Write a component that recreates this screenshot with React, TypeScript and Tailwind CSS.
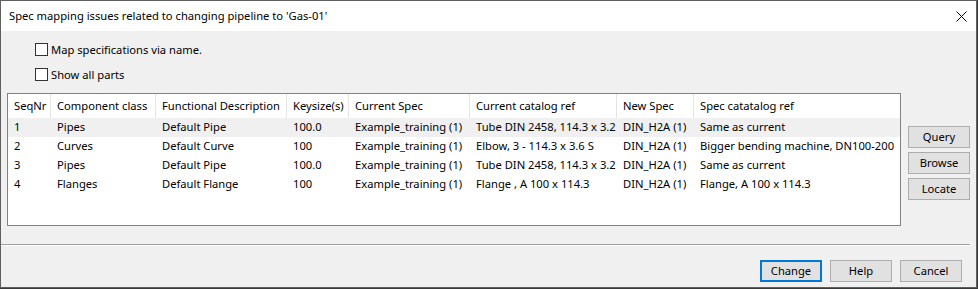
import React from "react";

const cols = "grid-cols-[43px_105px_131px_62px_121px_147px_77px_1fr]";

const headers = [
  "SeqNr",
  "Component class",
  "Functional Description",
  "Keysize(s)",
  "Current Spec",
  "Current catalog ref",
  "New Spec",
  "Spec catatalog ref",
];

const rows = [
  ["1", "Pipes", "Default Pipe", "100.0", "Example_training (1)", "Tube DIN 2458, 114.3 x 3.2", "DIN_H2A (1)", "Same as current"],
  ["2", "Curves", "Default Curve", "100", "Example_training (1)", "Elbow, 3 - 114.3 x 3.6 S", "DIN_H2A (1)", "Bigger bending machine, DN100-200"],
  ["3", "Pipes", "Default Pipe", "100.0", "Example_training (1)", "Tube DIN 2458, 114.3 x 3.2", "DIN_H2A (1)", "Same as current"],
  ["4", "Flanges", "Default Flange", "100", "Example_training (1)", "Flange , A 100 x 114.3", "DIN_H2A (1)", "Flange, A 100 x 114.3"],
];

function Checkbox({ label }: { label: string }) {
  return (
    <div className="flex items-center h-[13px]">
      <div className="w-[13px] h-[13px] border border-[#333333] bg-white" />
      <span className="ml-[3px] leading-[13px]">{label}</span>
    </div>
  );
}

function Btn({ label, primary }: { label: string; primary?: boolean }) {
  return (
    <div
      className={
        "w-[62px] h-[22px] flex items-center justify-center bg-[#e1e1e1] " +
        (primary ? "border-2 border-[#0078d7]" : "border border-[#adadad]")
      }
    >
      {label}
    </div>
  );
}

export default function App() {
  return (
    <div
      className="w-[978px] h-[289px] bg-[#3a3a3a] text-[11.2px] text-black"
      style={{ fontFamily: '"Noto Sans", sans-serif' }}
    >
      <div className="w-[977px] h-[288px] border border-[#5f5f5f] bg-[#f0f0f0] flex flex-col">
        {/* title bar */}
        <div className="h-[30px] bg-white flex items-center justify-between pl-[8px] pr-[9px] shrink-0">
          <span>Spec mapping issues related to changing pipeline to 'Gas-01'</span>
          <svg width="11" height="11" viewBox="0 0 11 11">
            <path d="M0.5 0.5 L10.5 10.5 M10.5 0.5 L0.5 10.5" stroke="#000" strokeWidth="1" />
          </svg>
        </div>

        {/* checkboxes */}
        <div className="pl-[34px] pt-[12px] flex flex-col gap-[12px]">
          <Checkbox label="Map specifications via name." />
          <Checkbox label="Show all parts" />
        </div>

        {/* table + side buttons */}
        <div className="flex pl-[6px] mt-[12px]">
          <div className="w-[894px] h-[133px] border border-[#828282] bg-white">
            <div className={"grid h-[24px] " + cols}>
              {headers.map((h, i) => (
                <div
                  key={h}
                  className={
                    "flex items-center pl-[6px] whitespace-nowrap " +
                    (i < headers.length - 1 ? "border-r border-[#e5e5e5]" : "")
                  }
                >
                  {h}
                </div>
              ))}
            </div>
            {rows.map((r, ri) => (
              <div
                key={ri}
                className={"grid h-[19px] " + cols + (ri === 0 ? " bg-[#f0f0f0]" : "")}
              >
                {r.map((c, ci) => (
                  <div key={ci} className="flex items-center pl-[6px] whitespace-nowrap">
                    {c}
                  </div>
                ))}
              </div>
            ))}
          </div>
          <div className="ml-[7px] pt-[33px] flex flex-col gap-[4px]">
            <Btn label="Query" />
            <Btn label="Browse" />
            <Btn label="Locate" />
          </div>
        </div>

        {/* separator */}
        <div className="mt-[18px] w-[969px] border-t border-[#a0a0a0] border-b border-b-white h-[2px]" />

        {/* bottom buttons */}
        <div className="flex justify-end gap-[8px] pr-[14px] mt-[14px]">
          <Btn label="Change" primary />
          <Btn label="Help" />
          <Btn label="Cancel" />
        </div>
      </div>
    </div>
  );
}
